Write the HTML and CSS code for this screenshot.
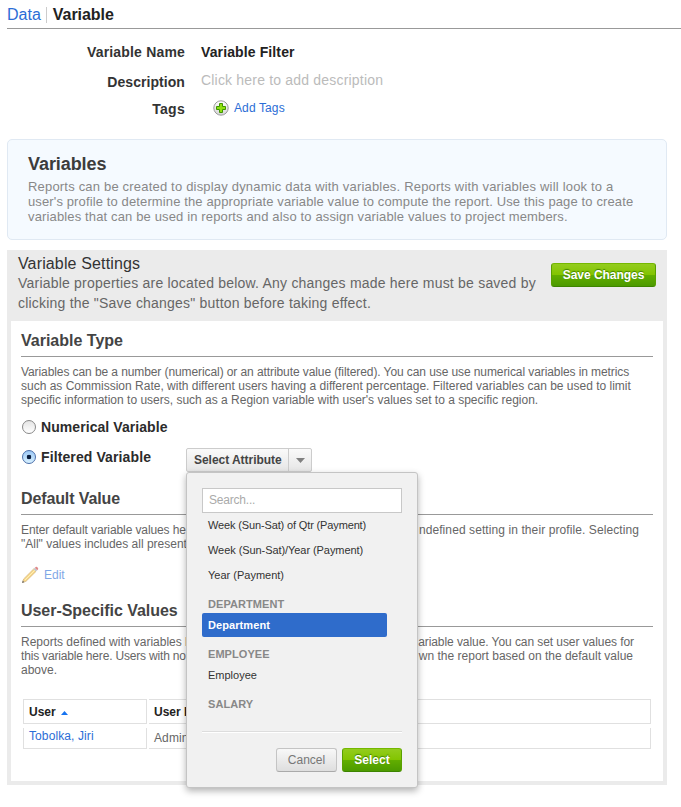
FILE: index.html
```html
<!DOCTYPE html>
<html lang="en">
<head>
<meta charset="utf-8">
<title>Data | Variable</title>
<link rel="stylesheet" href="styles.css">
</head>
<body>
<header class="crumbs"><a class="crumb-link">Data</a><span class="crumb-sep"></span><b class="crumb-current">Variable</b></header>

<section class="meta">
  <div class="meta-label ls-name">Variable Name</div><div class="meta-name">Variable Filter</div>
  <div class="meta-label meta-desc-label">Description</div><div class="meta-desc">Click here to add description</div>
  <div class="meta-label meta-tags-label">Tags</div>
  <div class="meta-tags">
    <svg class="plus" width="16" height="16" viewBox="0 0 16 16">
      <defs><linearGradient id="ring" x1="0" y1="0" x2="0" y2="1"><stop offset="0" stop-color="#fff"/><stop offset="1" stop-color="#d4d4d4"/></linearGradient></defs>
      <circle cx="8" cy="8" r="7.2" fill="url(#ring)" stroke="#9a9a9a"/>
      <path d="M6.500 3.500h3v3h3v3h-3v3h-3v-3h-3v-3h3z" fill="#8fe010" stroke="#3f9500"/>
    </svg>
    <a>Add Tags</a>
  </div>
</section>

<section class="info">
  <h1>Variables</h1>
  <p><span class="line ls-a">Reports can be created to display dynamic data with variables. Reports with variables will look to a</span>
  <span class="line ls-b">user's profile to determine the appropriate variable value to compute the report. Use this page to create</span>
  <span class="line ls-c">variables that can be used in reports and also to assign variable values to project members.</span></p>
</section>

<section class="settings">
  <div class="settings-head">
    <div class="settings-copy">
      <h2>Variable Settings</h2>
      <p><span class="line">Variable properties are located below. Any changes made here must be saved by</span>
      <span class="line">clicking the "Save changes" button before taking effect.</span></p>
    </div>
    <button class="btn green save">Save Changes</button>
  </div>

  <div class="settings-body">
    <h3>Variable Type</h3>
    <p class="copy type-copy"><span class="line tight">Variables can be a number (numerical) or an attribute value (filtered). You can use use numerical variables in metrics</span>
    <span class="line">such as Commission Rate, with different users having a different percentage. Filtered variables can be used to limit</span>
    <span class="line">specific information to users, such as a Region variable with user's values set to a specific region.</span></p>

    <div class="option"><span class="radio"></span><b>Numerical Variable</b></div>
    <div class="option option-filtered">
      <span class="radio checked"></span><b class="filtered">Filtered Variable</b>
      <div class="picker">
        <div class="picker-btn"><span class="picker-text">Select Attribute</span><span class="picker-arrow"><svg width="9" height="5" viewBox="0 0 9 5"><path d="M0 0h9L4.500 5z" fill="#808080"/></svg></span></div>
        <div class="popup">
          <input class="search" placeholder="Search...">
          <ul class="list">
            <li class="week">Week (Sun-Sat) of Qtr (Payment)</li>
            <li class="week-year">Week (Sun-Sat)/Year (Payment)</li>
            <li>Year (Payment)</li>
            <li class="group">DEPARTMENT</li>
            <li class="selected">Department</li>
            <li class="group">EMPLOYEE</li>
            <li>Employee</li>
            <li class="group">SALARY</li>
          </ul>
          <div class="popup-foot"><button class="btn grey">Cancel</button><button class="btn green">Select</button></div>
        </div>
      </div>
    </div>

    <h3 class="h-default">Default Value</h3>
    <div class="copy default-copy">
      <div class="split"><span class="l-a">Enter default variable values here</span><span class="r-a">ndefined setting in their profile. Selecting</span></div>
      <div class="split"><span>"All" values includes all present</span></div>
    </div>
    <div class="edit">
      <svg width="18" height="18" viewBox="0 0 18 18">
        <path d="M1.500 16.500l1.200-3.600L12.600 3l2.400 2.400L5.100 15.200z" fill="#f3bf3c" stroke="#c08c30" stroke-width=".8"/>
        <path d="M4 14L13.800 4.200" stroke="#ffe68a"/>
        <path d="M12.600 3l1.200-1.200 2.400 2.400L15 5.400z" fill="#98a4b2"/>
        <path d="M13.800 1.800l1-.9c1-.7 3 1.300 2.300 2.300l-.9 1z" fill="#cc3c3c"/>
        <path d="M1 17l.8-2.400 1.600 1.600z" fill="#111"/>
      </svg>
      <a>Edit</a>
    </div>

    <h3 class="h-user">User-Specific Values</h3>
    <div class="copy user-copy">
      <div class="split"><span>Reports defined with variables have</span><span class="r-b">ariable value. You can set user values for</span></div>
      <div class="split"><span class="l-c">this variable here. Users with no</span><span class="r-c">wn the report based on the default value</span></div>
      <div class="split"><span>above.</span></div>
    </div>

    <div class="table">
      <div class="cell head">User <svg class="sort" width="7" height="4" viewBox="0 0 7 4"><path d="M0 4L3.500 0 7 4z" fill="#1673f0"/></svg></div>
      <div class="cell head">User Role</div>
      <div class="cell body"><a>Tobolka, Jiri</a></div>
      <div class="cell body role">Administrator</div>
    </div>
  </div>
</section>
</body>
</html>
```
FILE: styles.css
```css
* { box-sizing: border-box; }
body { margin: 0; background: #fff; color: #333; font: 12px/14px "Liberation Sans", Arial, sans-serif; width: 681px; height: 807px; overflow: hidden; }
h1, h2, h3, p, ul { margin: 0; padding: 0; }
a { color: #2b6dd6; }
.line { display: block; white-space: nowrap; }

.crumbs { margin-left: 7px; height: 29px; padding-top: 1px; border-bottom: 1px solid #999; display: flex; font-size: 16px; line-height: 28px; }
.crumb-sep { width: 1px; height: 16px; margin: 6px 6px 0 5px; background: #ccc; }
.crumb-current { color: #222; letter-spacing: -.05px; }

.meta { display: grid; grid-template-columns: 185px 1fr; column-gap: 16px; grid-template-rows: 29px 28px 20px; margin-top: 13px; font-size: 14px; line-height: 20px; height: 97px; }
.meta-label { text-align: right; font-weight: bold; letter-spacing: .06px; }
.meta-tags-label { letter-spacing: .3px; }
.ls-name { letter-spacing: .18px; }
.meta-name { font-weight: bold; letter-spacing: .12px; color: #222; }
.meta-desc-label { padding-top: 1px; }
.meta-desc { color: #bbb; letter-spacing: .19px; margin-top: -1px; }
.meta-tags { display: flex; font-size: 12px; padding-left: 12px; letter-spacing: .12px; margin-top: -1px; }
.plus { margin: 2px 5px 0 0; }

.info { margin-left: 7px; width: 660px; height: 101px; border: 1px solid #e0e9f3; border-radius: 5px; background: #f5faff; padding: 13px 20px; }
.info h1 { font-size: 18px; line-height: 22px; color: #3c3c3c; letter-spacing: -.07px; }
.info p { margin-top: 4px; font-size: 13px; line-height: 15px; color: #888; }
.ls-a { letter-spacing: .19px; }
.ls-b { letter-spacing: .125px; }
.ls-c { letter-spacing: .14px; }

.settings { margin: 10px 0 0 7px; width: 660px; height: 535px; background: #ebebeb; padding: 0 4px 4px; display: flex; flex-direction: column; }
.settings-head { height: 71px; flex: none; display: flex; justify-content: space-between; padding: 4px 7px 0; }
.settings-copy h2 { font-size: 16px; font-weight: normal; line-height: 20px; height: 19px; letter-spacing: .14px; }
.settings-copy p { font-size: 14px; line-height: 20px; color: #666; letter-spacing: .21px; }
.btn { font: bold 12px/22px "Liberation Sans", Arial, sans-serif; height: 24px; padding: 0; border-radius: 3px; text-align: center; }
.green { color: #fff; border: 1px solid; border-color: #75b800 #5aa000 #3d8400; background: linear-gradient(#93cc1d, #82c400 50%, #62ae00 50%, #4c9a00); text-shadow: 0 -1px 1px #3d7d00; letter-spacing: .05px; }
.save { width: 105px; margin-top: 9px; letter-spacing: -.04px; }

.settings-body { background: #fff; flex: 1; padding: 10px 10px 0; }
h3 { font-size: 16px; line-height: 20px; height: 26px; border-bottom: 1px solid #999; color: #444; }
.copy { color: #666; }
.type-copy { margin-top: 8px; height: 52px; }
.tight { letter-spacing: -.09px; }
.option { display: flex; align-items: flex-start; height: 20px; font-size: 14px; line-height: 20px; letter-spacing: .07px; color: #2b2b2b; }
.option-filtered { margin-top: 10px; letter-spacing: .11px; }
.filtered { width: 145px; }
.radio { width: 14px; height: 14px; margin: 3px 5px 0 1px; border: 1px solid #888; border-radius: 50%; background: linear-gradient(#e4e4e4, #fff); }
.radio.checked { border-color: #4a6ea9; background: radial-gradient(circle, #0a1d3d 0 2px, transparent 2.6px), linear-gradient(#9cc8f5, #d8f1ff); }
.picker { position: relative; width: 126px; margin-top: 1px; letter-spacing: 0; }
.picker-btn { display: flex; width: 126px; height: 24px; border: 1px solid #ccc; border-radius: 2px; background: linear-gradient(#fafafa, #e6e6e6); font: bold 12px/22px "Liberation Sans", Arial, sans-serif; color: #444; letter-spacing: -.04px; }
.picker-text { width: 102px; padding-left: 7px; border-right: 1px solid #ccc; white-space: nowrap; }
.picker-arrow { flex: 1; display: flex; align-items: center; justify-content: center; }

.popup { position: absolute; z-index: 2; left: 0; top: 24px; width: 232px; height: 316px; background: #f1f1f1; border: 1px solid #c4c4c4; border-radius: 3px; box-shadow: 0 3px 7px rgba(0,0,0,.3); padding: 15px; }
.search { display: block; width: 200px; height: 25px; border: 1px solid #c8c8c8; border-radius: 0; background: #fff; padding: 0 6px 2px; font: 12px "Liberation Sans", Arial, sans-serif; letter-spacing: -.2px; outline: none; }
.search::placeholder { color: #aaa; opacity: 1; }
.list { list-style: none; height: 219px; border-bottom: 1px solid #ddd; box-shadow: 0 1px #fff; font-size: 11px; color: #333; }
.list li { height: 25px; line-height: 25px; padding-left: 6px; white-space: nowrap; }
.list .week { letter-spacing: -.14px; }
.list .week-year { letter-spacing: -.07px; }
.list .group { font-weight: bold; color: #888; padding-top: 4px; letter-spacing: .06px; }
.list .selected { width: 185px; height: 24px; line-height: 24px; margin-bottom: 1px; border-radius: 2px; background: #2f6ccb; color: #fff; font-weight: bold; letter-spacing: .08px; }
.popup-foot { display: flex; justify-content: flex-end; gap: 5px; margin-top: 16px; }
.popup-foot .green { width: 60px; }
.grey { width: 61px; font-weight: normal; color: #777; border: 1px solid #c4c4c4; border-bottom-color: #aaa; background: linear-gradient(#f8f8f8, #dedede); }

.h-default { margin-top: 22px; letter-spacing: -.12px; }
.default-copy { margin-top: 8px; }
.split { display: flex; justify-content: space-between; height: 14px; white-space: nowrap; }
.default-copy .split { padding-right: 14px; }
.l-a { letter-spacing: -.1px; }
.r-a { letter-spacing: .09px; }
.user-copy .split:nth-child(1) { padding-right: 19px; }
.user-copy .split:nth-child(2) { padding-right: 20px; }
.r-b { letter-spacing: -.07px; }
.l-c { letter-spacing: -.18px; }
.edit { display: flex; height: 18px; margin-top: 15px; line-height: 18px; opacity: .6; }
.edit a { margin-left: 5px; }
.h-user { margin-top: 17px; letter-spacing: -.04px; }
.user-copy { margin-top: 8px; }

.table { display: grid; grid-template-columns: 124px 502px; grid-template-rows: 25px 21px; column-gap: 2px; row-gap: 4px; margin: 22px 0 0 2px; }
.cell { border: 1px solid #e0e0e0; padding-left: 5px; }
.head { font-weight: bold; color: #222; line-height: 24px; }
.sort { margin-left: 2px; vertical-align: 1px; }
.body { border-top: 0; color: #666; line-height: 16px; letter-spacing: .1px; }
.role { padding-top: 2px; }
.cell:nth-child(even) { padding-left: 5px; border-left: 0; }
```
